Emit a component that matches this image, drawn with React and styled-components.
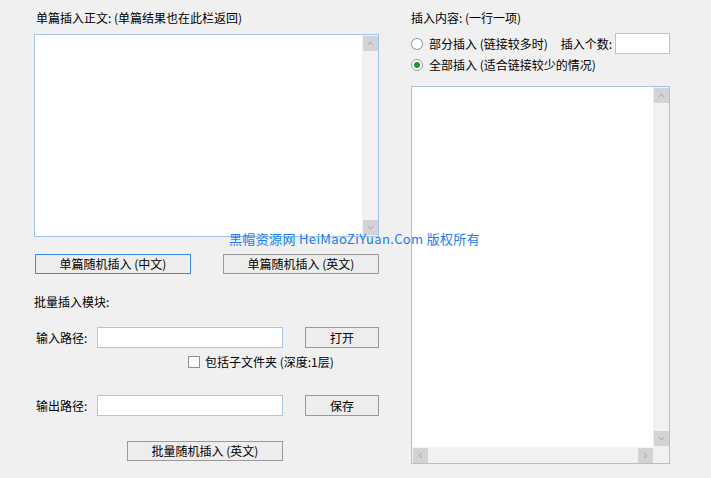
import React from "react";
import styled, { createGlobalStyle } from "styled-components";

const Global = createGlobalStyle`
  html, body { margin: 0; padding: 0; }
  body {
    background: #f0f0f0;
    font-family: "Noto Sans CJK SC", "Liberation Sans", sans-serif;
    font-size: 12px;
    line-height: 16px;
    color: #000;
  }
`;

const Page = styled.div`
  position: relative;
  width: 711px;
  height: 478px;
  display: flex;
  padding-top: 10px;
  box-sizing: border-box;
`;

const LeftCol = styled.div`
  margin-left: 34px;
  width: 345px;
  display: flex;
  flex-direction: column;
`;

const RightCol = styled.div`
  margin-left: 32px;
  width: 259px;
  display: flex;
  flex-direction: column;
`;

const Label = styled.div`
  height: 16px;
  line-height: 16px;
  white-space: nowrap;
  padding-left: ${(p) => p.$indent || 0}px;
  margin-top: ${(p) => p.$top || 0}px;
`;

const Box = styled.div`
  margin-top: ${(p) => p.$top || 0}px;
  height: ${(p) => p.$h}px;
  border: 1px solid #9fc5ee;
  background: #fff;
  display: grid;
  grid-template-columns: 1fr 16px;
  grid-template-rows: ${(p) => (p.$hscroll ? "1fr 16px" : "1fr")};
  box-sizing: border-box;
`;

const Content = styled.div`
  background: #fff;
`;

const VScroll = styled.div`
  background: #f3f0f3;
  display: flex;
  flex-direction: column;
  justify-content: space-between;
  padding: 1px 0 1px 1px;
`;

const HScroll = styled.div`
  background: #f3f0f3;
  display: flex;
  justify-content: space-between;
  padding: 1px 0 0 1px;
`;

const Corner = styled.div`
  background: #f3f0f3;
`;

const Arrow = styled.div`
  width: 15px;
  height: 15px;
  background: #d4d2d4;
  display: flex;
  align-items: center;
  justify-content: center;
  svg { width: 7px; height: 7px; }
`;

const Chevron = ({ dir }) => {
  const paths = {
    up: "M1 5 L3.5 2 L6 5",
    down: "M1 2 L3.5 5 L6 2",
    left: "M5 1 L2 3.5 L5 6",
    right: "M2 1 L5 3.5 L2 6",
  };
  return (
    <svg viewBox="0 0 7 7">
      <path d={paths[dir]} fill="none" stroke="#a9a9a9" strokeWidth="1" />
    </svg>
  );
};

const Row = styled.div`
  display: flex;
  align-items: center;
  margin-top: ${(p) => p.$top || 0}px;
  padding-left: ${(p) => p.$indent || 0}px;
  justify-content: ${(p) => p.$justify || "flex-start"};
  white-space: nowrap;
`;

const Button = styled.div`
  width: ${(p) => p.$w}px;
  height: ${(p) => p.$h || 20}px;
  box-sizing: border-box;
  border: 1px solid ${(p) => (p.$focus ? "#2f8ff5" : "#9a9a9a")};
  background: #ededed;
  display: flex;
  align-items: center;
  justify-content: center;
  white-space: nowrap;
  margin-left: ${(p) => p.$ml || 0}px;
`;

const Input = styled.div`
  width: ${(p) => p.$w}px;
  height: 21px;
  box-sizing: border-box;
  border: 1px solid #a6c8ee;
  background: #fff;
  margin-left: ${(p) => p.$ml || 0}px;
`;

const FieldLabel = styled.div`
  width: 63px;
  padding-left: 2px;
  white-space: nowrap;
  box-sizing: border-box;
`;

const Check = styled.div`
  width: 12px;
  height: 12px;
  box-sizing: border-box;
  border: 1px solid #8e8e8e;
  background: #fff;
  margin-right: 5px;
`;

const Radio = styled.div`
  width: 12px;
  height: 12px;
  box-sizing: border-box;
  border-radius: 50%;
  border: 1px solid #9a9a9a;
  background: #fff;
  margin-right: 6px;
  display: flex;
  align-items: center;
  justify-content: center;
  &::after {
    content: "";
    display: ${(p) => (p.$on ? "block" : "none")};
    width: 6px;
    height: 6px;
    border-radius: 50%;
    background: #1a9a2e;
  }
`;

const CountLabel = styled.span`
  margin-left: 13px;
`;

const Watermark = styled.div`
  position: absolute;
  left: 229px;
  top: 230px;
  color: #1a7cf0;
  font-size: 13px;
  letter-spacing: 0.35px;
  line-height: 18px;
  white-space: nowrap;
`;

const ScrollBox = ({ h, top, hscroll }) => (
  <Box $h={h} $top={top} $hscroll={hscroll}>
    <Content />
    <VScroll>
      <Arrow><Chevron dir="up" /></Arrow>
      <Arrow><Chevron dir="down" /></Arrow>
    </VScroll>
    {hscroll && (
      <>
        <HScroll>
          <Arrow><Chevron dir="left" /></Arrow>
          <Arrow><Chevron dir="right" /></Arrow>
        </HScroll>
        <Corner />
      </>
    )}
  </Box>
);

export default function App() {
  return (
    <>
      <Global />
      <Page>
        <LeftCol>
          <Label $indent={2}>单篇插入正文: (单篇结果也在此栏返回)</Label>
          <ScrollBox h={203} top={8} />
          <Row $top={17} $justify="space-between" $indent={1}>
            <Button $w={156} $focus>单篇随机插入 (中文)</Button>
            <Button $w={156}>单篇随机插入 (英文)</Button>
          </Row>
          <Label $top={20}>批量插入模块:</Label>
          <Row $top={17}>
            <FieldLabel>输入路径:</FieldLabel>
            <Input $w={186} />
            <Button $w={74} $h={21} $ml={22}>打开</Button>
          </Row>
          <Row $top={6} $indent={154}>
            <Check />
            包括子文件夹 (深度:1层)
          </Row>
          <Row $top={25}>
            <FieldLabel>输出路径:</FieldLabel>
            <Input $w={186} />
            <Button $w={74} $h={21} $ml={22}>保存</Button>
          </Row>
          <Row $top={25} $indent={93}>
            <Button $w={156}>批量随机插入 (英文)</Button>
          </Row>
        </LeftCol>
        <RightCol>
          <Label>插入内容: (一行一项)</Label>
          <Row $top={7}>
            <Radio />
            部分插入 (链接较多时)
            <CountLabel>插入个数:</CountLabel>
            <Input $w={55} $ml={3} />
          </Row>
          <Row $top={1} style={{ height: 20 }}>
            <Radio $on />
            全部插入 (适合链接较少的情况)
          </Row>
          <ScrollBox h={378} top={11} hscroll />
        </RightCol>
        <Watermark>黑帽资源网 HeiMaoZiYuan.Com 版权所有</Watermark>
      </Page>
    </>
  );
}
